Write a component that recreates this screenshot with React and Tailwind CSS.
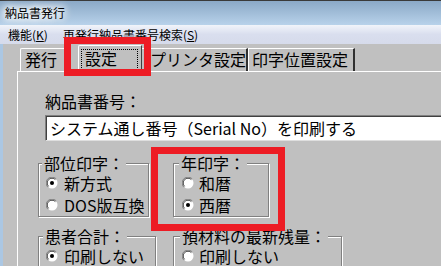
import React from 'react';

function Radio({ checked }) {
  return (
    <svg width="12" height="12" viewBox="0 0 12 12" className="shrink-0">
      <circle cx="6" cy="6" r="5.5" fill="#fff" />
      <path d="M1.8 10.2 A5.5 5.5 0 0 1 10.2 1.8" fill="none" stroke="#808080" strokeWidth="1" />
      <path d="M2.6 9.4 A4.5 4.5 0 0 1 9.4 2.6" fill="none" stroke="#404040" strokeWidth="1" />
      {checked && <circle cx="6" cy="6" r="2" fill="#000" />}
    </svg>
  );
}

function RadioRow({ label, checked, gap = 'gap-[6px]' }) {
  return (
    <div className={`flex items-center h-[22px] ${gap}`}>
      <Radio checked={checked} />
      <div className="leading-4 h-4 pb-[1px]">{label}</div>
    </div>
  );
}

function Group({ title, width, legendMl, padL, children }) {
  return (
    <fieldset
      className={`${width} border border-[#808080] shadow-[inset_1px_1px_0_#fff,1px_1px_0_#fff]`}
    >
      <legend className={`${legendMl} px-[2px] leading-4 h-4 bg-[#c0c0c0] relative`}>{title}</legend>
      <div className={`${padL} pt-[1px]`}>{children}</div>
    </fieldset>
  );
}

export default function App() {
  return (
    <div className="w-[441px] h-[266px] overflow-hidden bg-[#c0c0c0] text-black flex flex-col relative font-['Noto_Sans_CJK_JP',sans-serif] text-[16px]">
      {/* Title bar */}
      <div className="h-[25px] shrink-0 border-t border-[#3a3a3a] bg-gradient-to-b from-[#8ba9c7] to-[#b8d2ea] flex items-center pl-[5px]">
        <div className="text-[12px] leading-3 h-3 [text-shadow:0_0_6px_#fff,0_0_8px_#fff,0_0_10px_#fff,0_0_12px_#fff]">
          納品書発行
        </div>
      </div>

      {/* Menu bar */}
      <div className="h-[19px] shrink-0 bg-gradient-to-b from-[#f1f4fa] via-[#d9deee] to-[#d6dbeb] flex items-center text-[12px] leading-3">
        <div className="ml-[8px] h-3">
          機能(<span className="underline">K</span>)
        </div>
        <div className="ml-[15px] h-3">
          再発行納品書番号検索(<span className="underline">S</span>)
        </div>
      </div>

      {/* Body */}
      <div className="flex flex-1 min-h-0">
        <div className="w-[3px] shrink-0 bg-[#abc7e3]" />
        <div className="flex-1 pl-[14px] flex flex-col min-w-0">
          {/* Tabs */}
          <div className="h-[27px] shrink-0 flex items-end">
            <div className="ml-[3px] w-[46px] h-[23px] border-l border-t border-white border-r border-r-[#404040] rounded-tl-[2px] flex items-center pl-[4px] pb-[2px] leading-4">
              発行
            </div>
            <div className="ml-[12px] w-[64px] h-[28px] -mb-[2px] relative z-10 bg-[#c0c0c0] border-l border-t border-white border-r border-r-[#404040] rounded-tl-[2px] pt-[3px] pl-[2px]">
              <div className="w-[57px] h-[21px] border border-dotted border-black flex items-center pl-[3px] pb-[3px] leading-4">
                設定
              </div>
            </div>
            <div className="w-[106px] h-[23px] border-t border-white border-r-2 border-r-[#303030] flex items-center pl-[8px] pb-[2px] leading-4">
              プリンタ設定
            </div>
            <div className="w-[107px] h-[23px] border-l border-t border-white border-r-2 border-r-[#303030] flex items-center pl-[3px] pb-[2px] leading-4">
              印字位置設定
            </div>
          </div>

          {/* Panel */}
          <div className="flex-1 border-l border-t border-white pl-[20px] flex flex-col">
            <div className="ml-[7px] mt-[21px] leading-4 h-4">納品書番号：</div>
            <div className="ml-[7px] mt-[6px] h-[26px] w-[420px] shrink-0 bg-white border border-[#808080] border-b-[#dfdfdf] border-r-[#dfdfdf] shadow-[inset_1px_1px_0_#404040] flex items-center pl-[4px] pb-[1px] leading-4 whitespace-nowrap">
              システム通し番号（Serial No）を印刷する
            </div>

            <div className="flex mt-[14px] gap-[24px]">
              <Group title="部位印字：" width="w-[111px]" legendMl="ml-[3px]" padL="pl-[7px]">
                <RadioRow label="新方式" checked />
                <RadioRow label="DOS版互換" />
              </Group>
              <Group title="年印字：" width="w-[96px]" legendMl="ml-[5px]" padL="pl-[8px]">
                <RadioRow label="和暦" gap="gap-[5px]" />
                <RadioRow label="西暦" checked gap="gap-[5px]" />
              </Group>
            </div>

            <div className="flex mt-[11px] gap-[17px]">
              <Group title="患者合計：" width="w-[118px]" legendMl="ml-[4px]" padL="pl-[7px]">
                <RadioRow label="印刷しない" checked />
              </Group>
              <Group title="預材料の最新残量：" width="w-[169px]" legendMl="ml-[6px]" padL="pl-[8px]">
                <RadioRow label="印刷しない" gap="gap-[5px]" />
              </Group>
            </div>
          </div>
        </div>
      </div>

      {/* Red annotation boxes */}
      <div className="absolute left-[64px] top-[37px] w-[87px] h-[39px] border-[7px] border-[#ed1c24] z-20" />
      <div className="absolute left-[151px] top-[147px] w-[134px] h-[84px] border-[7px] border-[#ed1c24] z-20" />
    </div>
  );
}
